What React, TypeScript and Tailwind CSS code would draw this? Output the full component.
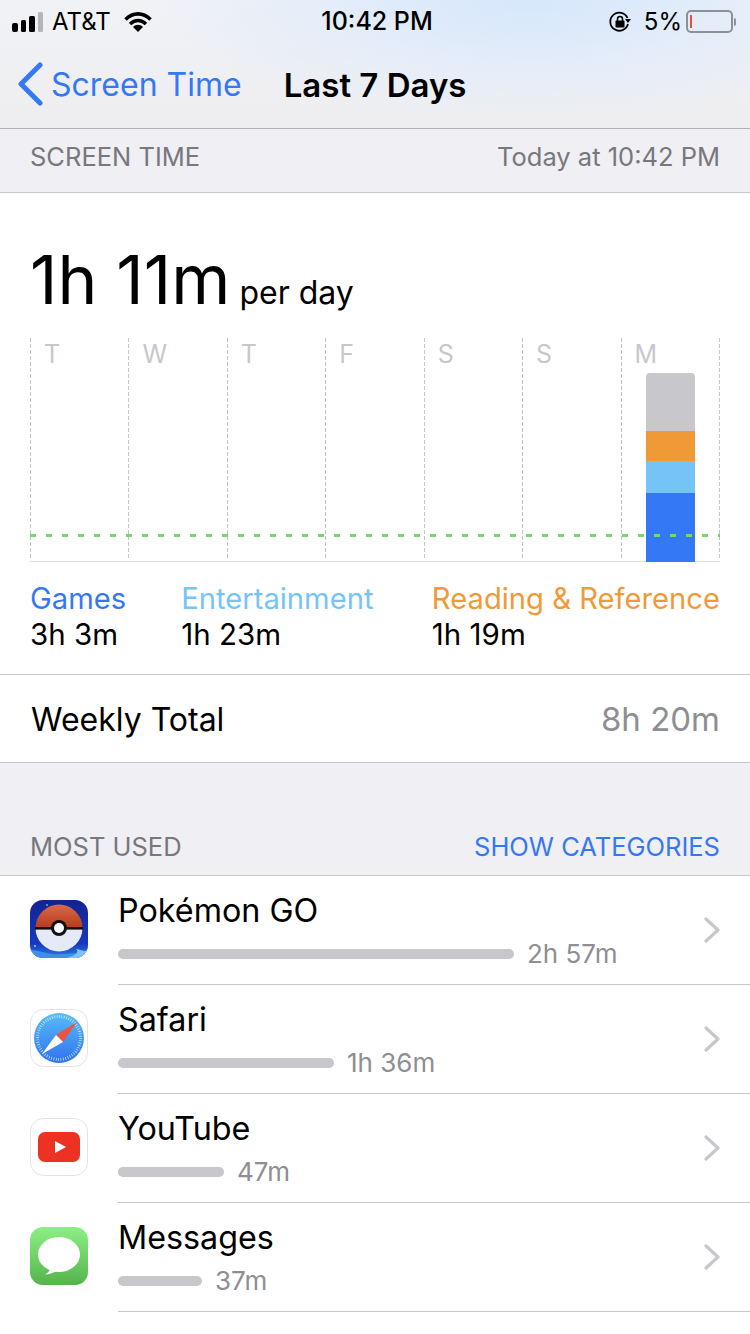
const days = ['T', 'W', 'T', 'F', 'S', 'S', 'M'];

const legend = [
  { name: 'Games', time: '3h 3m', color: 'text-[#3478f6]', width: 'w-[152px]' },
  { name: 'Entertainment', time: '1h 23m', color: 'text-[#76c4f7]', width: 'w-[252px]' },
  { name: 'Reading & Reference', time: '1h 19m', color: 'text-[#f09a37]', width: 'flex-1' },
];

const PokemonIcon = () => (
  <svg viewBox="0 0 58 58" className="h-[58px] w-[58px]">
    <defs>
      <linearGradient id="pokeSky" x1="0" y1="0" x2="0" y2="1">
        <stop offset="0" stopColor="#12238f" />
        <stop offset="0.75" stopColor="#1638c0" />
        <stop offset="1" stopColor="#2f7fe0" />
      </linearGradient>
      <linearGradient id="pokeTop" x1="0" y1="0" x2="0" y2="1">
        <stop offset="0" stopColor="#d9694a" />
        <stop offset="1" stopColor="#b93a1c" />
      </linearGradient>
      <clipPath id="pokeClip">
        <rect width="58" height="58" rx="13" />
      </clipPath>
    </defs>
    <g clipPath="url(#pokeClip)">
      <rect width="58" height="58" fill="url(#pokeSky)" />
      <path d="M0 50 C8 50 14 53 22 54 C34 55 46 52 58 53 V58 H0 Z" fill="#3f8fe6" />
      <path d="M36 58 C44 56 50 53 46 49 C52 50 56 52 58 50 V58 Z" fill="#7fc0f5" />
      <path d="M5.5 28 A23.5 23.5 0 0 1 52.5 28 Z" fill="url(#pokeTop)" />
      <path d="M5.5 28 A23.5 23.5 0 0 0 52.5 28 Z" fill="#e6e9f7" />
      <rect x="5" y="27" width="48" height="2.6" fill="#111" />
      <circle cx="29" cy="28" r="8" fill="#111" />
      <circle cx="29" cy="28" r="5" fill="#fff" />
      <circle cx="17" cy="5" r="1" fill="#6fa8ee" />
      <circle cx="5" cy="46" r="1" fill="#9cc8f5" />
    </g>
  </svg>
);

const SafariIcon = () => (
  <svg viewBox="0 0 58 58" className="h-[58px] w-[58px]">
    <defs>
      <linearGradient id="safariFace" x1="0" y1="0" x2="0" y2="1">
        <stop offset="0" stopColor="#55bdf7" />
        <stop offset="1" stopColor="#3272ee" />
      </linearGradient>
    </defs>
    <rect x="0.5" y="0.5" width="57" height="57" rx="13" fill="#fff" stroke="#e4e4e6" />
    <circle cx="29" cy="29" r="25" fill="url(#safariFace)" />
    <circle cx="29" cy="29" r="21.5" fill="none" stroke="#d5ecfb" strokeWidth="3" strokeDasharray="0.7 1.7" />
    <path d="M47 13 L26 26 L33 33 Z" fill="#ee5340" />
    <path d="M12 45 L26 26 L33 33 Z" fill="#fff" />
  </svg>
);

const YouTubeIcon = () => (
  <svg viewBox="0 0 58 58" className="h-[58px] w-[58px]">
    <rect x="0.5" y="0.5" width="57" height="57" rx="13" fill="#fff" stroke="#e4e4e6" />
    <rect x="8" y="14" width="42" height="30" rx="7" fill="#ec3323" />
    <path d="M25 23 L36 29 L25 35 Z" fill="#fff" />
  </svg>
);

const MessagesIcon = () => (
  <svg viewBox="0 0 58 58" className="h-[58px] w-[58px]">
    <defs>
      <linearGradient id="messagesBg" x1="0" y1="0" x2="0" y2="1">
        <stop offset="0" stopColor="#8bf083" />
        <stop offset="1" stopColor="#55b44c" />
      </linearGradient>
    </defs>
    <rect width="58" height="58" rx="13" fill="url(#messagesBg)" />
    <ellipse cx="29" cy="27.5" rx="21" ry="17.5" fill="#fff" />
    <path d="M20 41 C20 44 18 46 15 47.5 C19 47.5 23 46 26 44 Z" fill="#fff" />
  </svg>
);

const apps = [
  { name: 'Pokémon GO', time: '2h 57m', bar: 'w-[396px]', icon: <PokemonIcon /> },
  { name: 'Safari', time: '1h 36m', bar: 'w-[216px]', icon: <SafariIcon /> },
  { name: 'YouTube', time: '47m', bar: 'w-[106px]', icon: <YouTubeIcon /> },
  { name: 'Messages', time: '37m', bar: 'w-[84px]', icon: <MessagesIcon /> },
];

const dashedLine =
  'w-px bg-[repeating-linear-gradient(to_bottom,#c4c4c6_0,#c4c4c6_4px,transparent_4px,transparent_6px)]';

const StatusBar = () => (
  <div className="flex h-10 items-center px-3 pt-[3px] text-[24px] leading-none text-black">
    <div className="flex w-[298px] items-center">
      <div className="flex items-end gap-[3px]">
        <div className="h-[9px] w-[5.5px] rounded-[2px] bg-black" />
        <div className="h-[12px] w-[5.5px] rounded-[1.5px] bg-black" />
        <div className="h-[16px] w-[5.5px] rounded-[1.5px] bg-black" />
        <div className="h-[20px] w-[5.5px] rounded-[1.5px] bg-[#b4b5b8]" />
      </div>
      <span className="ml-[9px]">AT&amp;T</span>
      <svg viewBox="0 0 28 20" className="ml-[13px] h-[20px] w-[28px]">
        <path d="M1.5 7.5 C9 0 19 0 26.5 7.5" fill="none" stroke="#000" strokeWidth="3.6" />
        <path d="M6 12 C11 7.5 17 7.5 22 12" fill="none" stroke="#000" strokeWidth="3.6" />
        <path d="M9 15 C12 12 16 12 19 15 L14 20 Z" fill="#000" />
      </svg>
    </div>
    <span className="w-[134px] text-center text-[25px] font-medium">10:42 PM</span>
    <div className="ml-auto flex items-center pr-[2px]">
      <svg viewBox="0 0 24 24" className="h-[24px] w-[24px]">
        <path d="M19.5 8 A9 9 0 1 0 20 14" fill="none" stroke="#000" strokeWidth="1.8" />
        <path d="M17 9 L23 9 L20 13 Z" fill="#000" />
        <rect x="7.5" y="10.5" width="9" height="7" rx="1" fill="#000" />
        <path d="M9.5 11 V9 A2.5 2.5 0 0 1 14.5 9 V11" fill="none" stroke="#000" strokeWidth="1.5" />
      </svg>
      <span className="ml-[12px]">5%</span>
      <div className="ml-[4px] flex h-[23px] w-[47px] items-center rounded-[5px] border-2 border-[#8e9096] pl-[2px]">
        <div className="h-[13px] w-[2px] bg-[#ee4b3d]" />
      </div>
      <div className="ml-px h-[8px] w-[2px] rounded-r-sm bg-[#8e9096]" />
    </div>
  </div>
);

const Chart = () => (
  <div className="relative mx-[30px] mt-[24px] flex h-[224px] border-b border-[#e2e2e4]">
    {days.map((day, id) => (
      <div className="flex flex-1" key={id}>
        <div className={`mb-[3px] ${dashedLine}`} />
        <span className="ml-[13px] mt-[3px] text-[25px] leading-[26px] text-[#c7c7cc]">{day}</span>
      </div>
    ))}
    <div className={`mb-[3px] ${dashedLine}`} />
    <div className="absolute bottom-[-1px] right-[25px] flex h-[189px] w-[49px] flex-col overflow-hidden rounded-t-[4px]">
      <div className="h-[58px] bg-[#c7c7cc]" />
      <div className="h-[30px] bg-[#f09a37]" />
      <div className="h-[32px] bg-[#76c4f7]" />
      <div className="flex-1 bg-[#3478f6]" />
    </div>
    <div className="absolute bottom-[24px] left-0 h-[3px] w-full bg-[repeating-linear-gradient(to_right,#76d672_0,#76d672_6px,transparent_6px,transparent_16px)]" />
  </div>
);

const App = () => {
  return (
    <div className="h-[1334px] w-[750px] overflow-hidden bg-white font-['Inter','Liberation_Sans',sans-serif]">
      <header className="h-[129px] border-b border-[#b2b2b4] bg-[radial-gradient(ellipse_380px_125px_at_530px_0px,#d6e7fc_0%,rgba(226,236,250,0.7)_60%,transparent_100%),linear-gradient(to_bottom,#f1f2f6,#eeeef0)]">
        <StatusBar />
        <nav className="flex h-[88px] items-center">
          <svg viewBox="0 0 26 44" className="ml-[17px] h-[44px] w-[26px]">
            <path d="M23 3 L4 22 L23 41" fill="none" stroke="#3478f6" strokeWidth="5" strokeLinecap="round" strokeLinejoin="round" />
          </svg>
          <span className="ml-[8px] pt-[2px] text-[32px] leading-none text-[#3478f6]">Screen Time</span>
          <span className="ml-[42px] pt-[2px] text-[33px] font-semibold leading-none text-black">Last 7 Days</span>
        </nav>
      </header>

      <div className="flex h-[64px] items-center justify-between border-b border-[#c8c8cc] bg-[#efeff4] px-[30px] pb-[7px] text-[25.5px] text-[#77777c]">
        <span>SCREEN TIME</span>
        <span>Today at 10:42 PM</span>
      </div>

      <section className="pt-[53px]">
        <div className="flex items-baseline px-[30px] leading-none text-black">
          <span className="text-[67.5px]">1h 11m</span>
          <span className="ml-[9px] text-[32px]">per day</span>
        </div>
        <Chart />
        <div className="mt-[19px] flex whitespace-nowrap pl-[30px] pr-[30px]">
          {legend.map((item) => (
            <div className={item.width} key={item.name}>
              <div className={`text-[29.2px] leading-9 ${item.color}`}>{item.name}</div>
              <div className="text-[29.5px] leading-[35px] text-black">{item.time}</div>
            </div>
          ))}
        </div>
        <div className="mt-[22px] flex h-[89px] items-center justify-between border-y border-[#c8c8cc] pl-[31px] pr-[30px] pt-[3px] text-[32px]">
          <span className="text-black">Weekly Total</span>
          <span className="text-[33px] text-[#8e8e93]">8h 20m</span>
        </div>
      </section>

      <div className="flex h-[113px] items-end justify-between border-b border-[#c8c8cc] bg-[#efeff4] px-[30px] pb-[13px] text-[25.5px] leading-[30px]">
        <span className="text-[#77777c]">MOST USED</span>
        <span className="text-[#3478f6]">SHOW CATEGORIES</span>
      </div>

      <ul>
        {apps.map((app) => (
          <li className="flex h-[109px] items-center pl-[30px]" key={app.name}>
            <div className="mb-[3px] shrink-0">{app.icon}</div>
            <div className="ml-[30px] flex h-full flex-1 items-center border-b border-[#c8c8cc] pr-[30px]">
              <div className="flex-1">
                <div className="text-[32.3px] leading-[40px] text-black">{app.name}</div>
                <div className="mt-[8px] flex items-center">
                  <div className={`h-[10px] rounded-full bg-[#c7c7cc] ${app.bar}`} />
                  <span className="ml-[13px] text-[26px] leading-[30px] text-[#8e8e93]">{app.time}</span>
                </div>
              </div>
              <svg viewBox="0 0 16 26" className="h-[26px] w-[16px]">
                <path d="M2 2 L14 13 L2 24" fill="none" stroke="#c7c7cc" strokeWidth="3.2" strokeLinecap="round" strokeLinejoin="round" />
              </svg>
            </div>
          </li>
        ))}
      </ul>
    </div>
  );
};

export default App;
